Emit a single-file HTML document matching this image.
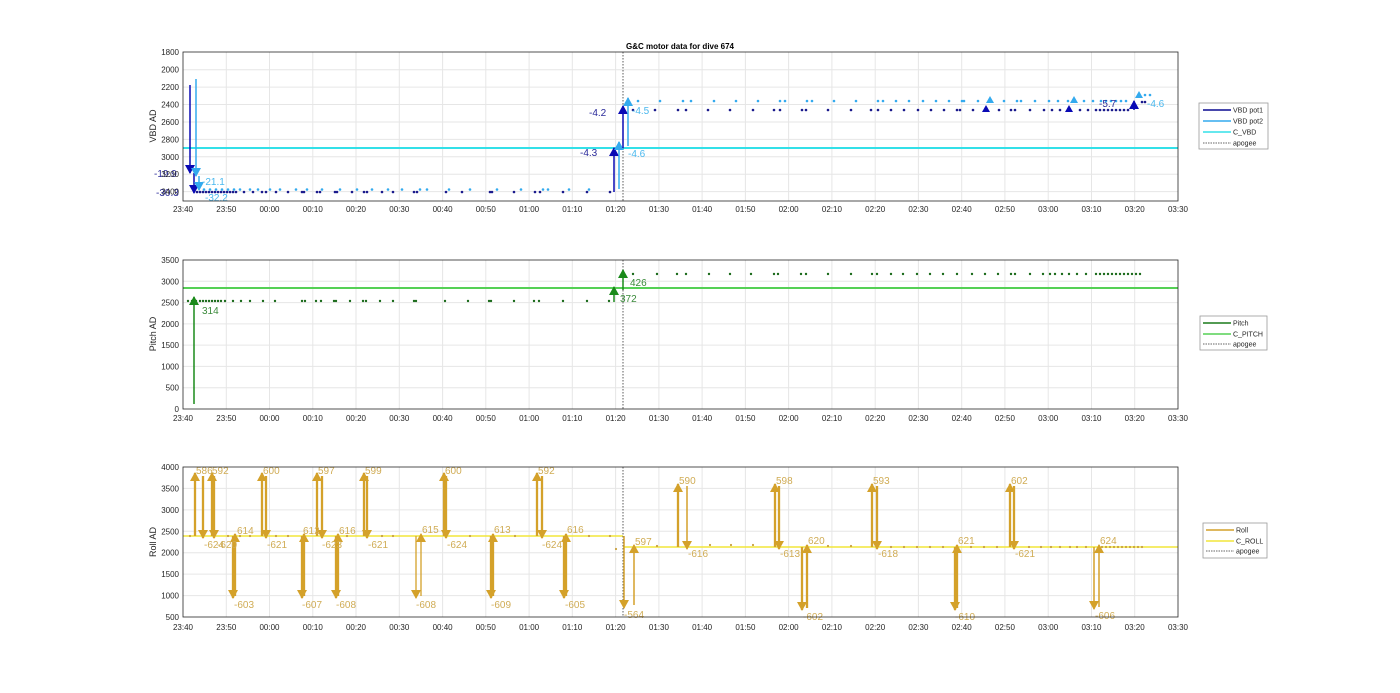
<!DOCTYPE html>
<html><head><meta charset="utf-8"><style>
html,body{margin:0;padding:0;background:#fff;}
svg{display:block;font-family:"Liberation Sans",sans-serif;}
.tk{font-size:8px;fill:#262626;}
.g{stroke:#e6e6e6;stroke-width:1;}
.ax{fill:none;stroke:#262626;stroke-width:0.8;}
</style></head><body>
<svg width="1400" height="693" viewBox="0 0 1400 693" xmlns="http://www.w3.org/2000/svg">
<defs>
<marker id="mdb" markerUnits="userSpaceOnUse" markerWidth="10" markerHeight="10" refX="8" refY="5" orient="auto"><path d="M0,0L9,5L0,10z" fill="#0a0ab4"/></marker>
<marker id="mlb" markerUnits="userSpaceOnUse" markerWidth="10" markerHeight="10" refX="8" refY="5" orient="auto"><path d="M0,0L9,5L0,10z" fill="#33aaee"/></marker>
<marker id="mg" markerUnits="userSpaceOnUse" markerWidth="10" markerHeight="10" refX="8" refY="5" orient="auto"><path d="M0,0L9,5L0,10z" fill="#1a8a1a"/></marker>
<marker id="my" markerUnits="userSpaceOnUse" markerWidth="10" markerHeight="10" refX="8" refY="5" orient="auto"><path d="M0,0L9,5L0,10z" fill="#d4a12a"/></marker>
<g id="vg">
<path class="g" d="M226.3 0V1M269.5 0V1M312.8 0V1M356 0V1M399.3 0V1M442.6 0V1M485.8 0V1M529.1 0V1M572.3 0V1M615.6 0V1M658.9 0V1M702.1 0V1M745.4 0V1M788.6 0V1M831.9 0V1M875.2 0V1M918.4 0V1M961.7 0V1M1004.9 0V1M1048.2 0V1M1091.5 0V1M1134.7 0V1"/>
</g>
</defs>

<text x="680" y="49" text-anchor="middle" font-size="8" font-weight="bold" fill="#000">G&amp;C motor data for dive 674</text>

<!-- ================= PLOT 1 ================= -->
<g>
<use href="#vg" transform="translate(0,52) scale(1,149)"/>
<path class="g" d="M183 69.7H1178M183 87.1H1178M183 104.5H1178M183 122H1178M183 139.4H1178M183 156.8H1178M183 174.2H1178M183 191.6H1178"/>
<line x1="183" y1="148" x2="1178" y2="148" stroke="#33e0e8" stroke-width="2"/>
<line x1="623" y1="52" x2="623" y2="201" stroke="#333" stroke-width="0.8" stroke-dasharray="1.5,1.5"/>
<g fill="#1a1a8c">
<circle cx="197" cy="192" r="1.3"/><circle cx="200" cy="192" r="1.3"/><circle cx="203" cy="192" r="1.3"/><circle cx="206" cy="192" r="1.3"/><circle cx="209" cy="192" r="1.3"/><circle cx="212" cy="192" r="1.3"/><circle cx="215" cy="192" r="1.3"/><circle cx="218" cy="192" r="1.3"/><circle cx="221" cy="192" r="1.3"/><circle cx="224" cy="192" r="1.3"/><circle cx="227" cy="192" r="1.3"/><circle cx="230" cy="192" r="1.3"/><circle cx="233" cy="192" r="1.3"/><circle cx="236" cy="192" r="1.3"/><circle cx="244" cy="192" r="1.3"/><circle cx="253" cy="192" r="1.3"/><circle cx="262" cy="192" r="1.3"/><circle cx="266" cy="192" r="1.3"/><circle cx="276" cy="192" r="1.3"/><circle cx="288" cy="192" r="1.3"/><circle cx="302" cy="192" r="1.3"/><circle cx="304" cy="192" r="1.3"/><circle cx="317" cy="192" r="1.3"/><circle cx="320" cy="192" r="1.3"/><circle cx="335" cy="192" r="1.3"/><circle cx="337" cy="192" r="1.3"/><circle cx="352" cy="192" r="1.3"/><circle cx="364" cy="192" r="1.3"/><circle cx="367" cy="192" r="1.3"/><circle cx="382" cy="192" r="1.3"/><circle cx="393" cy="192" r="1.3"/><circle cx="414" cy="192" r="1.3"/><circle cx="417" cy="192" r="1.3"/><circle cx="446" cy="192" r="1.3"/><circle cx="462" cy="192" r="1.3"/><circle cx="490" cy="192" r="1.3"/><circle cx="492" cy="192" r="1.3"/><circle cx="514" cy="192" r="1.3"/><circle cx="535" cy="192" r="1.3"/><circle cx="540" cy="192" r="1.3"/><circle cx="563" cy="192" r="1.3"/><circle cx="587" cy="192" r="1.3"/><circle cx="610" cy="192" r="1.3"/>
</g>
<g fill="#33aaee">
<circle cx="204" cy="189.5" r="1.3"/><circle cx="210" cy="189.5" r="1.3"/><circle cx="216" cy="189.5" r="1.3"/><circle cx="222" cy="189.5" r="1.3"/><circle cx="228" cy="189.5" r="1.3"/><circle cx="234" cy="189.5" r="1.3"/><circle cx="240" cy="189.5" r="1.3"/><circle cx="250" cy="189.5" r="1.3"/><circle cx="258" cy="189.5" r="1.3"/><circle cx="270" cy="189.5" r="1.3"/><circle cx="280" cy="189.5" r="1.3"/><circle cx="296" cy="189.5" r="1.3"/><circle cx="307" cy="189.5" r="1.3"/><circle cx="322" cy="189.5" r="1.3"/><circle cx="340" cy="189.5" r="1.3"/><circle cx="357" cy="189.5" r="1.3"/><circle cx="372" cy="189.5" r="1.3"/><circle cx="388" cy="189.5" r="1.3"/><circle cx="402" cy="189.5" r="1.3"/><circle cx="420" cy="189.5" r="1.3"/><circle cx="427" cy="189.5" r="1.3"/><circle cx="449" cy="189.5" r="1.3"/><circle cx="470" cy="189.5" r="1.3"/><circle cx="497" cy="189.5" r="1.3"/><circle cx="521" cy="189.5" r="1.3"/><circle cx="543" cy="189.5" r="1.3"/><circle cx="548" cy="189.5" r="1.3"/><circle cx="569" cy="189.5" r="1.3"/><circle cx="589" cy="189.5" r="1.3"/>
</g>
<g fill="#1a1a8c">
<circle cx="633" cy="110" r="1.3"/><circle cx="655" cy="110" r="1.3"/><circle cx="678" cy="110" r="1.3"/><circle cx="686" cy="110" r="1.3"/><circle cx="708" cy="110" r="1.3"/><circle cx="730" cy="110" r="1.3"/><circle cx="753" cy="110" r="1.3"/><circle cx="774" cy="110" r="1.3"/><circle cx="780" cy="110" r="1.3"/><circle cx="802" cy="110" r="1.3"/><circle cx="806" cy="110" r="1.3"/><circle cx="828" cy="110" r="1.3"/><circle cx="851" cy="110" r="1.3"/><circle cx="871" cy="110" r="1.3"/><circle cx="878" cy="110" r="1.3"/><circle cx="891" cy="110" r="1.3"/><circle cx="904" cy="110" r="1.3"/><circle cx="918" cy="110" r="1.3"/><circle cx="931" cy="110" r="1.3"/><circle cx="944" cy="110" r="1.3"/><circle cx="957" cy="110" r="1.3"/><circle cx="960" cy="110" r="1.3"/><circle cx="973" cy="110" r="1.3"/><circle cx="999" cy="110" r="1.3"/><circle cx="1011" cy="110" r="1.3"/><circle cx="1015" cy="110" r="1.3"/><circle cx="1030" cy="110" r="1.3"/><circle cx="1044" cy="110" r="1.3"/><circle cx="1052" cy="110" r="1.3"/><circle cx="1060" cy="110" r="1.3"/><circle cx="1080" cy="110" r="1.3"/><circle cx="1088" cy="110" r="1.3"/><circle cx="1096" cy="110" r="1.3"/><circle cx="1100" cy="110" r="1.3"/><circle cx="1104" cy="110" r="1.3"/><circle cx="1108" cy="110" r="1.3"/><circle cx="1112" cy="110" r="1.3"/><circle cx="1116" cy="110" r="1.3"/><circle cx="1120" cy="110" r="1.3"/><circle cx="1124" cy="110" r="1.3"/><circle cx="1128" cy="110" r="1.3"/><circle cx="1142" cy="102" r="1.3"/><circle cx="1145" cy="102" r="1.3"/>
</g>
<g fill="#33aaee">
<circle cx="638" cy="101" r="1.3"/><circle cx="660" cy="101" r="1.3"/><circle cx="683" cy="101" r="1.3"/><circle cx="691" cy="101" r="1.3"/><circle cx="714" cy="101" r="1.3"/><circle cx="736" cy="101" r="1.3"/><circle cx="758" cy="101" r="1.3"/><circle cx="780" cy="101" r="1.3"/><circle cx="785" cy="101" r="1.3"/><circle cx="807" cy="101" r="1.3"/><circle cx="812" cy="101" r="1.3"/><circle cx="834" cy="101" r="1.3"/><circle cx="856" cy="101" r="1.3"/><circle cx="878" cy="101" r="1.3"/><circle cx="883" cy="101" r="1.3"/><circle cx="896" cy="101" r="1.3"/><circle cx="909" cy="101" r="1.3"/><circle cx="923" cy="101" r="1.3"/><circle cx="936" cy="101" r="1.3"/><circle cx="949" cy="101" r="1.3"/><circle cx="962" cy="101" r="1.3"/><circle cx="964" cy="101" r="1.3"/><circle cx="978" cy="101" r="1.3"/><circle cx="1004" cy="101" r="1.3"/><circle cx="1017" cy="101" r="1.3"/><circle cx="1021" cy="101" r="1.3"/><circle cx="1035" cy="101" r="1.3"/><circle cx="1049" cy="101" r="1.3"/><circle cx="1058" cy="101" r="1.3"/><circle cx="1068" cy="101" r="1.3"/><circle cx="1084" cy="101" r="1.3"/><circle cx="1093" cy="101" r="1.3"/><circle cx="1101" cy="101" r="1.3"/><circle cx="1106" cy="101" r="1.3"/><circle cx="1111" cy="101" r="1.3"/><circle cx="1116" cy="101" r="1.3"/><circle cx="1121" cy="101" r="1.3"/><circle cx="1126" cy="101" r="1.3"/><circle cx="1145" cy="95" r="1.3"/><circle cx="1150" cy="95" r="1.3"/>
</g>
<g fill="none" stroke-width="1.5">
<line x1="190" y1="85" x2="190" y2="173" stroke="#0a0ab4" marker-end="url(#mdb)"/>
<line x1="194" y1="173" x2="194" y2="193" stroke="#0a0ab4" marker-end="url(#mdb)"/>
<line x1="196" y1="79" x2="196" y2="176" stroke="#33aaee" marker-end="url(#mlb)"/>
<line x1="199" y1="176" x2="199" y2="190" stroke="#33aaee" marker-end="url(#mlb)"/>
<line x1="614" y1="192" x2="614" y2="148" stroke="#0a0ab4" marker-end="url(#mdb)"/>
<line x1="619" y1="189" x2="619" y2="142" stroke="#33aaee" marker-end="url(#mlb)"/>
<line x1="623" y1="148" x2="623" y2="106" stroke="#0a0ab4" marker-end="url(#mdb)"/>
<line x1="628" y1="146" x2="628" y2="98" stroke="#33aaee" marker-end="url(#mlb)"/>
<line x1="1134" y1="110" x2="1134" y2="101" stroke="#0a0ab4" marker-end="url(#mdb)"/>
</g>
<g>
<path d="M982 112l4-7 4 7z" fill="#0a0ab4"/><path d="M986 103l4-7 4 7z" fill="#33aaee"/>
<path d="M1065 112l4-7 4 7z" fill="#0a0ab4"/><path d="M1070 103l4-7 4 7z" fill="#33aaee"/>
<path d="M1135 98l4-7 4 7z" fill="#33aaee"/>
</g>
<g font-size="10">
<text x="589" y="116" fill="#2a2a9a">-4.2</text>
<text x="580" y="156" fill="#2a2a9a">-4.3</text>
<text x="632" y="114" fill="#4ab8ee">-4.5</text>
<text x="628" y="157" fill="#4ab8ee">-4.6</text>
<text x="1099" y="107" fill="#2a2a9a">-5.7</text>
<text x="1147" y="107" fill="#4ab8ee">-4.6</text>
<text x="154" y="177" fill="#2a2a9a">-19.9</text>
<text x="156" y="196" fill="#2a2a9a">-30.3</text>
<text x="202" y="185" fill="#4ab8ee">-21.1</text>
<text x="205" y="201" fill="#4ab8ee">-32.2</text>
</g>
<rect class="ax" x="183" y="52" width="995" height="149"/>
<g class="tk" text-anchor="end">
<text x="179" y="55">1800</text><text x="179" y="72.5">2000</text><text x="179" y="90">2200</text><text x="179" y="107.5">2400</text><text x="179" y="125">2600</text><text x="179" y="142.5">2800</text><text x="179" y="160">3000</text><text x="179" y="177">3200</text><text x="179" y="194.5">3400</text>
</g>
<text transform="translate(156,126) rotate(-90)" font-size="9" text-anchor="middle" fill="#262626">VBD AD</text>
</g>

<!-- ================= PLOT 2 ================= -->
<g>
<use href="#vg" transform="translate(0,260) scale(1,149)"/>
<path class="g" d="M183 281.3H1178M183 302.6H1178M183 323.9H1178M183 345.1H1178M183 366.4H1178M183 387.7H1178"/>
<line x1="183" y1="288" x2="1178" y2="288" stroke="#55d055" stroke-width="2"/>
<line x1="623" y1="260" x2="623" y2="409" stroke="#333" stroke-width="0.8" stroke-dasharray="1.5,1.5"/>
<g fill="#1a6a1a">
<circle cx="188" cy="301" r="1.2"/><circle cx="192" cy="301" r="1.2"/><circle cx="196" cy="301" r="1.2"/><circle cx="200" cy="301" r="1.2"/><circle cx="203" cy="301" r="1.2"/><circle cx="206" cy="301" r="1.2"/><circle cx="209" cy="301" r="1.2"/><circle cx="212" cy="301" r="1.2"/><circle cx="215" cy="301" r="1.2"/><circle cx="218" cy="301" r="1.2"/><circle cx="221" cy="301" r="1.2"/><circle cx="225" cy="301" r="1.2"/><circle cx="233" cy="301" r="1.2"/><circle cx="241" cy="301" r="1.2"/><circle cx="250" cy="301" r="1.2"/><circle cx="263" cy="301" r="1.2"/><circle cx="275" cy="301" r="1.2"/><circle cx="302" cy="301" r="1.2"/><circle cx="305" cy="301" r="1.2"/><circle cx="316" cy="301" r="1.2"/><circle cx="321" cy="301" r="1.2"/><circle cx="334" cy="301" r="1.2"/><circle cx="336" cy="301" r="1.2"/><circle cx="350" cy="301" r="1.2"/><circle cx="363" cy="301" r="1.2"/><circle cx="366" cy="301" r="1.2"/><circle cx="380" cy="301" r="1.2"/><circle cx="393" cy="301" r="1.2"/><circle cx="414" cy="301" r="1.2"/><circle cx="416" cy="301" r="1.2"/><circle cx="445" cy="301" r="1.2"/><circle cx="468" cy="301" r="1.2"/><circle cx="489" cy="301" r="1.2"/><circle cx="491" cy="301" r="1.2"/><circle cx="514" cy="301" r="1.2"/><circle cx="534" cy="301" r="1.2"/><circle cx="539" cy="301" r="1.2"/><circle cx="563" cy="301" r="1.2"/><circle cx="587" cy="301" r="1.2"/><circle cx="609" cy="301" r="1.2"/>
<circle cx="633" cy="274" r="1.2"/><circle cx="657" cy="274" r="1.2"/><circle cx="677" cy="274" r="1.2"/><circle cx="686" cy="274" r="1.2"/><circle cx="709" cy="274" r="1.2"/><circle cx="730" cy="274" r="1.2"/><circle cx="751" cy="274" r="1.2"/><circle cx="774" cy="274" r="1.2"/><circle cx="778" cy="274" r="1.2"/><circle cx="801" cy="274" r="1.2"/><circle cx="806" cy="274" r="1.2"/><circle cx="828" cy="274" r="1.2"/><circle cx="851" cy="274" r="1.2"/><circle cx="872" cy="274" r="1.2"/><circle cx="877" cy="274" r="1.2"/><circle cx="891" cy="274" r="1.2"/><circle cx="903" cy="274" r="1.2"/><circle cx="917" cy="274" r="1.2"/><circle cx="930" cy="274" r="1.2"/><circle cx="943" cy="274" r="1.2"/><circle cx="957" cy="274" r="1.2"/><circle cx="972" cy="274" r="1.2"/><circle cx="985" cy="274" r="1.2"/><circle cx="998" cy="274" r="1.2"/><circle cx="1011" cy="274" r="1.2"/><circle cx="1015" cy="274" r="1.2"/><circle cx="1030" cy="274" r="1.2"/><circle cx="1043" cy="274" r="1.2"/><circle cx="1050" cy="274" r="1.2"/><circle cx="1055" cy="274" r="1.2"/><circle cx="1062" cy="274" r="1.2"/><circle cx="1069" cy="274" r="1.2"/><circle cx="1077" cy="274" r="1.2"/><circle cx="1086" cy="274" r="1.2"/><circle cx="1096" cy="274" r="1.2"/><circle cx="1100" cy="274" r="1.2"/><circle cx="1104" cy="274" r="1.2"/><circle cx="1108" cy="274" r="1.2"/><circle cx="1112" cy="274" r="1.2"/><circle cx="1116" cy="274" r="1.2"/><circle cx="1120" cy="274" r="1.2"/><circle cx="1124" cy="274" r="1.2"/><circle cx="1128" cy="274" r="1.2"/><circle cx="1132" cy="274" r="1.2"/><circle cx="1136" cy="274" r="1.2"/><circle cx="1140" cy="274" r="1.2"/>
</g>
<g stroke="#1a8a1a" stroke-width="1.5">
<line x1="194" y1="404" x2="194" y2="297" marker-end="url(#mg)"/>
<line x1="614" y1="302" x2="614" y2="287" marker-end="url(#mg)"/>
<line x1="623" y1="290" x2="623" y2="270" marker-end="url(#mg)"/>
</g>
<g font-size="10" fill="#3a8a3a">
<text x="202" y="314">314</text><text x="620" y="302">372</text><text x="630" y="286">426</text>
</g>
<rect class="ax" x="183" y="260" width="995" height="149"/>
<g class="tk" text-anchor="end">
<text x="179" y="263">3500</text><text x="179" y="284.3">3000</text><text x="179" y="305.6">2500</text><text x="179" y="326.9">2000</text><text x="179" y="348.1">1500</text><text x="179" y="369.4">1000</text><text x="179" y="390.7">500</text><text x="179" y="412">0</text>
</g>
<text transform="translate(156,334) rotate(-90)" font-size="9" text-anchor="middle" fill="#262626">Pitch AD</text>
</g>

<!-- ================= PLOT 3 ================= -->
<g>
<use href="#vg" transform="translate(0,467) scale(1,150)"/>
<path class="g" d="M183 488.4H1178M183 509.9H1178M183 531.3H1178M183 552.7H1178M183 574.1H1178M183 595.6H1178"/>
<line x1="183" y1="536" x2="623" y2="536" stroke="#f2e63a" stroke-width="1.5"/>
<line x1="623" y1="547" x2="1178" y2="547" stroke="#f2e63a" stroke-width="1.5"/>
<line x1="623" y1="467" x2="623" y2="617" stroke="#333" stroke-width="0.8" stroke-dasharray="1.5,1.5"/>
<g fill="#c8a040">
<circle cx="190" cy="536" r="1.1"/><circle cx="228" cy="536" r="1.1"/><circle cx="240" cy="536" r="1.1"/><circle cx="250" cy="536" r="1.1"/><circle cx="276" cy="536" r="1.1"/><circle cx="288" cy="536" r="1.1"/><circle cx="347" cy="536" r="1.1"/><circle cx="382" cy="536" r="1.1"/><circle cx="393" cy="536" r="1.1"/><circle cx="470" cy="536" r="1.1"/><circle cx="515" cy="536" r="1.1"/><circle cx="589" cy="536" r="1.1"/><circle cx="610" cy="536" r="1.1"/><circle cx="616" cy="549" r="1.1"/>
<circle cx="657" cy="546" r="1.1"/><circle cx="710" cy="545" r="1.1"/><circle cx="731" cy="545" r="1.1"/><circle cx="753" cy="545" r="1.1"/><circle cx="828" cy="546" r="1.1"/><circle cx="851" cy="546" r="1.1"/><circle cx="891" cy="547" r="1.1"/><circle cx="904" cy="547" r="1.1"/><circle cx="917" cy="547" r="1.1"/><circle cx="930" cy="547" r="1.1"/><circle cx="943" cy="547" r="1.1"/><circle cx="971" cy="547" r="1.1"/><circle cx="984" cy="547" r="1.1"/><circle cx="997" cy="547" r="1.1"/><circle cx="1029" cy="547" r="1.1"/><circle cx="1041" cy="547" r="1.1"/><circle cx="1051" cy="547" r="1.1"/><circle cx="1060" cy="547" r="1.1"/><circle cx="1070" cy="547" r="1.1"/><circle cx="1077" cy="547" r="1.1"/><circle cx="1086" cy="547" r="1.1"/><circle cx="1102" cy="547" r="1.1"/><circle cx="1106" cy="547" r="1.1"/><circle cx="1110" cy="547" r="1.1"/><circle cx="1114" cy="547" r="1.1"/><circle cx="1118" cy="547" r="1.1"/><circle cx="1122" cy="547" r="1.1"/><circle cx="1126" cy="547" r="1.1"/><circle cx="1130" cy="547" r="1.1"/><circle cx="1134" cy="547" r="1.1"/><circle cx="1138" cy="547" r="1.1"/><circle cx="1142" cy="547" r="1.1"/>
</g>
<g stroke="#d4a12a" stroke-width="2.3">
<line x1="195" y1="536" x2="195" y2="473" marker-end="url(#my)"/>
<line x1="203" y1="476" x2="203" y2="538" marker-end="url(#my)"/>
<line x1="212" y1="536" x2="212" y2="473" marker-end="url(#my)"/>
<line x1="214" y1="476" x2="214" y2="538" marker-end="url(#my)"/>
<line x1="233" y1="536" x2="233" y2="598" marker-end="url(#my)"/>
<line x1="235" y1="596" x2="235" y2="534" marker-end="url(#my)"/>
<line x1="262" y1="536" x2="262" y2="473" marker-end="url(#my)"/>
<line x1="266" y1="476" x2="266" y2="538" marker-end="url(#my)"/>
<line x1="302" y1="536" x2="302" y2="598" marker-end="url(#my)"/>
<line x1="304" y1="596" x2="304" y2="534" marker-end="url(#my)"/>
<line x1="317" y1="536" x2="317" y2="473" marker-end="url(#my)"/>
<line x1="322" y1="476" x2="322" y2="538" marker-end="url(#my)"/>
<line x1="336" y1="536" x2="336" y2="598" marker-end="url(#my)"/>
<line x1="338" y1="596" x2="338" y2="534" marker-end="url(#my)"/>
<line x1="364" y1="536" x2="364" y2="473" marker-end="url(#my)"/>
<line x1="367" y1="476" x2="367" y2="538" marker-end="url(#my)"/>
<line x1="416" y1="536" x2="416" y2="598" stroke-width="1.3" marker-end="url(#my)"/>
<line x1="421" y1="596" x2="421" y2="534" stroke-width="1.3" marker-end="url(#my)"/>
<line x1="444" y1="536" x2="444" y2="473" marker-end="url(#my)"/>
<line x1="446" y1="476" x2="446" y2="538" marker-end="url(#my)"/>
<line x1="491" y1="536" x2="491" y2="598" marker-end="url(#my)"/>
<line x1="493" y1="596" x2="493" y2="534" marker-end="url(#my)"/>
<line x1="537" y1="536" x2="537" y2="473" marker-end="url(#my)"/>
<line x1="542" y1="476" x2="542" y2="538" marker-end="url(#my)"/>
<line x1="564" y1="536" x2="564" y2="598" marker-end="url(#my)"/>
<line x1="566" y1="596" x2="566" y2="534" marker-end="url(#my)"/>
<line x1="624" y1="536" x2="624" y2="608" stroke-width="1.5" marker-end="url(#my)"/>
<line x1="634" y1="605" x2="634" y2="545" stroke-width="1.5" marker-end="url(#my)"/>
<line x1="678" y1="547" x2="678" y2="484" marker-end="url(#my)"/>
<line x1="687" y1="486" x2="687" y2="549" stroke-width="1.5" marker-end="url(#my)"/>
<line x1="775" y1="547" x2="775" y2="484" marker-end="url(#my)"/>
<line x1="779" y1="486" x2="779" y2="549" marker-end="url(#my)"/>
<line x1="802" y1="547" x2="802" y2="610" marker-end="url(#my)"/>
<line x1="807" y1="608" x2="807" y2="545" marker-end="url(#my)"/>
<line x1="872" y1="547" x2="872" y2="484" marker-end="url(#my)"/>
<line x1="877" y1="486" x2="877" y2="549" marker-end="url(#my)"/>
<line x1="955" y1="547" x2="955" y2="610" marker-end="url(#my)"/>
<line x1="957" y1="608" x2="957" y2="545" marker-end="url(#my)"/>
<line x1="1010" y1="547" x2="1010" y2="484" marker-end="url(#my)"/>
<line x1="1014" y1="486" x2="1014" y2="549" marker-end="url(#my)"/>
<line x1="1094" y1="547" x2="1094" y2="609" stroke-width="1.5" marker-end="url(#my)"/>
<line x1="1099" y1="607" x2="1099" y2="545" stroke-width="1.5" marker-end="url(#my)"/>
</g>
<g font-size="10" fill="#d0ac55">
<text x="196" y="474">586</text><text x="212" y="474">592</text><text x="204" y="548">-624</text><text x="217" y="548">-620</text>
<text x="237" y="534">614</text><text x="234" y="608">-603</text>
<text x="263" y="474">600</text><text x="267" y="548">-621</text>
<text x="303" y="534">612</text><text x="302" y="608">-607</text>
<text x="318" y="474">597</text><text x="322" y="548">-623</text>
<text x="339" y="534">616</text><text x="336" y="608">-608</text>
<text x="365" y="474">599</text><text x="368" y="548">-621</text>
<text x="422" y="533">615</text><text x="416" y="608">-608</text>
<text x="445" y="474">600</text><text x="447" y="548">-624</text>
<text x="494" y="533">613</text><text x="491" y="608">-609</text>
<text x="538" y="474">592</text><text x="542" y="548">-624</text>
<text x="567" y="533">616</text><text x="565" y="608">-605</text>
<text x="624" y="618">-564</text><text x="635" y="545">597</text>
<text x="679" y="484">590</text><text x="688" y="557">-616</text>
<text x="776" y="484">598</text><text x="780" y="557">-613</text>
<text x="808" y="544">620</text><text x="803" y="620">-602</text>
<text x="873" y="484">593</text><text x="878" y="557">-618</text>
<text x="958" y="544">621</text><text x="955" y="620">-610</text>
<text x="1011" y="484">602</text><text x="1015" y="557">-621</text>
<text x="1100" y="544">624</text><text x="1095" y="619">-606</text>
</g>
<rect class="ax" x="183" y="467" width="995" height="150"/>
<g class="tk" text-anchor="end">
<text x="179" y="470">4000</text><text x="179" y="491.4">3500</text><text x="179" y="512.9">3000</text><text x="179" y="534.3">2500</text><text x="179" y="555.7">2000</text><text x="179" y="577.1">1500</text><text x="179" y="598.6">1000</text><text x="179" y="620">500</text>
</g>
<text transform="translate(156,542) rotate(-90)" font-size="9" text-anchor="middle" fill="#262626">Roll AD</text>
</g>

<g class="tk" text-anchor="middle">
<g id="xl">
<text x="183">23:40</text><text x="226.3">23:50</text><text x="269.5">00:00</text><text x="312.8">00:10</text><text x="356">00:20</text><text x="399.3">00:30</text><text x="442.6">00:40</text><text x="485.8">00:50</text><text x="529.1">01:00</text><text x="572.3">01:10</text><text x="615.6">01:20</text><text x="658.9">01:30</text><text x="702.1">01:40</text><text x="745.4">01:50</text><text x="788.6">02:00</text><text x="831.9">02:10</text><text x="875.2">02:20</text><text x="918.4">02:30</text><text x="961.7">02:40</text><text x="1004.9">02:50</text><text x="1048.2">03:00</text><text x="1091.5">03:10</text><text x="1134.7">03:20</text><text x="1178">03:30</text>
</g>
<use href="#xl" y="212"/>
<use href="#xl" y="421"/>
<use href="#xl" y="630"/>
</g>

<g font-size="7" fill="#262626">
<rect x="1199" y="103" width="69" height="46" fill="#fff" stroke="#999" stroke-width="0.8"/>
<line x1="1203" y1="110" x2="1231" y2="110" stroke="#0a0a90" stroke-width="1.5"/><text x="1233" y="112.5">VBD pot1</text>
<line x1="1203" y1="121" x2="1231" y2="121" stroke="#33aaee" stroke-width="1.5"/><text x="1233" y="123.5">VBD pot2</text>
<line x1="1203" y1="132" x2="1231" y2="132" stroke="#33e0e8" stroke-width="1.5"/><text x="1233" y="134.5">C_VBD</text>
<line x1="1203" y1="143" x2="1231" y2="143" stroke="#333" stroke-width="0.8" stroke-dasharray="1.5,1"/><text x="1233" y="145.5">apogee</text>

<rect x="1200" y="316" width="67" height="34" fill="#fff" stroke="#999" stroke-width="0.8"/>
<line x1="1203" y1="323" x2="1231" y2="323" stroke="#1a7a1a" stroke-width="1.5"/><text x="1233" y="325.5">Pitch</text>
<line x1="1203" y1="334" x2="1231" y2="334" stroke="#55d055" stroke-width="1.5"/><text x="1233" y="336.5">C_PITCH</text>
<line x1="1203" y1="344" x2="1231" y2="344" stroke="#333" stroke-width="0.8" stroke-dasharray="1.5,1"/><text x="1233" y="346.5">apogee</text>

<rect x="1203" y="523" width="64" height="35" fill="#fff" stroke="#999" stroke-width="0.8"/>
<line x1="1206" y1="530" x2="1234" y2="530" stroke="#d4a12a" stroke-width="1.5"/><text x="1236" y="532.5">Roll</text>
<line x1="1206" y1="541" x2="1234" y2="541" stroke="#f2e63a" stroke-width="1.5"/><text x="1236" y="543.5">C_ROLL</text>
<line x1="1206" y1="551" x2="1234" y2="551" stroke="#333" stroke-width="0.8" stroke-dasharray="1.5,1"/><text x="1236" y="553.5">apogee</text>
</g>
</svg>
</body></html>
